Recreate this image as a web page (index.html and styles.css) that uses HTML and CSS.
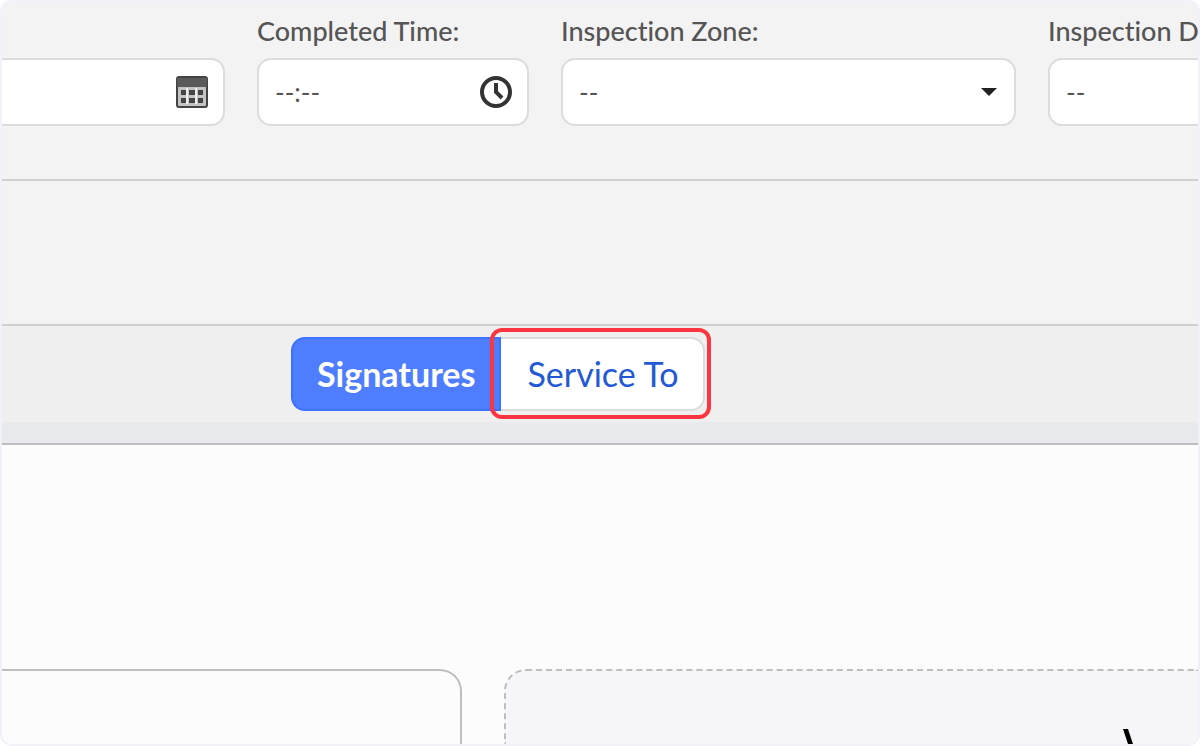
FILE: index.html
```
<!DOCTYPE html>
<html lang="en">
<head>
    <meta charset="UTF-8">
    <meta name="viewport" content="width=device-width, initial-scale=1.0">
    <title>Inspection</title>
    <link rel="stylesheet" href="styles.css">
</head>
<body>
    <div class="frame">
        <form class="fields">
            <div class="field field-first">
                <div class="control">
                    <input type="text" id="date" aria-label="Completed Date">
                    <button type="button" class="icon-btn" aria-label="Pick a date">
                        <svg width="34" height="34" viewBox="0 0 34 34">
                            <rect x="2" y="2" width="30" height="30" rx="2" fill="#c4c4c4" stroke="#444" stroke-width="2"/>
                            <path d="M2 3h30v9H2z" fill="#5a5a5a"/>
                            <path d="M6 15h5v5H6zM14 15h6v5h-6zM23 15h5v5h-5zM6 23h5v5H6zM14 23h6v5h-6zM23 23h5v5h-5z" fill="#444"/>
                            <path d="M12 13v16M21 13v16" stroke="#eee" stroke-width="2"/>
                        </svg>
                    </button>
                </div>
            </div>
            <div class="field">
                <label for="time">Completed Time:</label>
                <div class="control">
                    <input type="text" id="time" value="--:--">
                    <button type="button" class="icon-btn" aria-label="Pick a time">
                        <svg width="34" height="34" viewBox="0 0 34 34" fill="none" stroke="#333">
                            <circle cx="17" cy="17" r="14" stroke-width="4"/>
                            <path d="M17 8v9l6 6" stroke-width="4"/>
                        </svg>
                    </button>
                </div>
            </div>
            <div class="field">
                <label for="zone">Inspection Zone:</label>
                <div class="control">
                    <select id="zone">
                        <option>--</option>
                    </select>
                    <svg class="caret" width="18" height="10" viewBox="0 0 18 10"><path d="M1 1h16L9 9z" fill="#222"/></svg>
                </div>
            </div>
            <div class="field field-last">
                <label for="district">Inspection D</label>
                <div class="control">
                    <select id="district">
                        <option>--</option>
                    </select>
                </div>
            </div>
        </form>

        <div class="spacer"></div>

        <div class="tab-bar">
            <button type="button" class="tab active">Signatures</button>
            <button type="button" class="tab highlighted">Service To</button>
        </div>
        <div class="strip"></div>

        <div class="content">
            <div class="card"></div>
            <div class="card sign-pad">
                <svg width="16" height="16" viewBox="0 0 16 16"><path d="M1 1h5l5 15H6z" fill="#000"/></svg>
            </div>
        </div>
    </div>
</body>
</html>
```

FILE: styles.css
```
* {
    box-sizing: border-box;
}

body {
    margin: 0;
    background-color: white;
    font-family: Lato, sans-serif;
    font-variant-ligatures: none;
}

.frame {
    height: 100vh;
    display: flex;
    flex-direction: column;
    border: 2px solid #f2f1f8;
    border-radius: 12px;
    background-color: #f3f3f3;
    overflow: hidden;
}

/* top row of form fields */
.fields {
    display: grid;
    grid-template-columns: 223fr 272fr 455fr 150fr;
    gap: 32px;
    align-items: end;
    padding: 12px 0 53px;
    border-bottom: 2px solid #d0d0d0;
}

.field {
    min-width: 0;
}

label {
    display: block;
    height: 44px;
    line-height: 34px;
    font-size: 27px;
    font-weight: 500;
    color: #555;
    white-space: nowrap;
}

.control {
    position: relative;
    display: flex;
    align-items: center;
    height: 68px;
    border: 2px solid #dcdcdc;
    border-radius: 14px;
    background-color: white;
    overflow: hidden;
}

.field-first .control {
    border-left: none;
    border-top-left-radius: 0;
    border-bottom-left-radius: 0;
}

.field-last .control {
    border-right: none;
    border-top-right-radius: 0;
    border-bottom-right-radius: 0;
}

input,
select {
    flex: 1;
    min-width: 0;
    height: 100%;
    padding: 0 16px;
    border: none;
    outline: none;
    background: none;
    appearance: none;
    font-family: inherit;
    font-size: 26px;
    color: #555;
}

.icon-btn {
    display: flex;
    padding: 0;
    margin-right: 14px;
    border: none;
    background: none;
}

.caret {
    position: absolute;
    right: 16px;
    pointer-events: none;
}

.spacer {
    height: 145px;
    border-bottom: 2px solid #cfcfd1;
}

/* tabs */
.tab-bar {
    display: flex;
    padding: 11px 24% 11px 289px;
    background-color: #efefef;
}

.tab {
    position: relative;
    height: 74px;
    padding: 0 24px 2px 26px;
    border: 2px solid #dcdcdc;
    border-left: none;
    border-radius: 0 14px 14px 0;
    background-color: white;
    font-family: inherit;
    font-size: 34px;
    color: #2459d6;
    white-space: nowrap;
}

.tab.active {
    padding: 0 24px 2px;
    border: 2px solid #3d71ff;
    border-radius: 14px 0 0 14px;
    background-color: #4e7eff;
    font-weight: bold;
    color: white;
}

.highlighted::after {
    content: "";
    position: absolute;
    inset: -11px -8px -10px -11px;
    border: 4px solid #fb3640;
    border-radius: 12px;
}

.strip {
    height: 23px;
    background-color: #e9eaee;
    border-bottom: 2px solid #bebebe;
}

/* signature cards */
.content {
    flex: 1;
    display: grid;
    grid-template-columns: 460fr 694fr;
    gap: 42px;
    padding-top: 224px;
    background-color: #fcfcfc;
}

.card {
    border: 2px solid #bebebe;
    border-width: 2px 2px 0 0;
    border-top-right-radius: 22px;
}

.sign-pad {
    display: flex;
    align-items: flex-end;
    justify-content: flex-end;
    padding-right: 60px;
    border-style: dashed;
    border-width: 2px 0 0 2px;
    border-radius: 22px 0 0 0;
    background-color: #f6f6f9;
}
```
